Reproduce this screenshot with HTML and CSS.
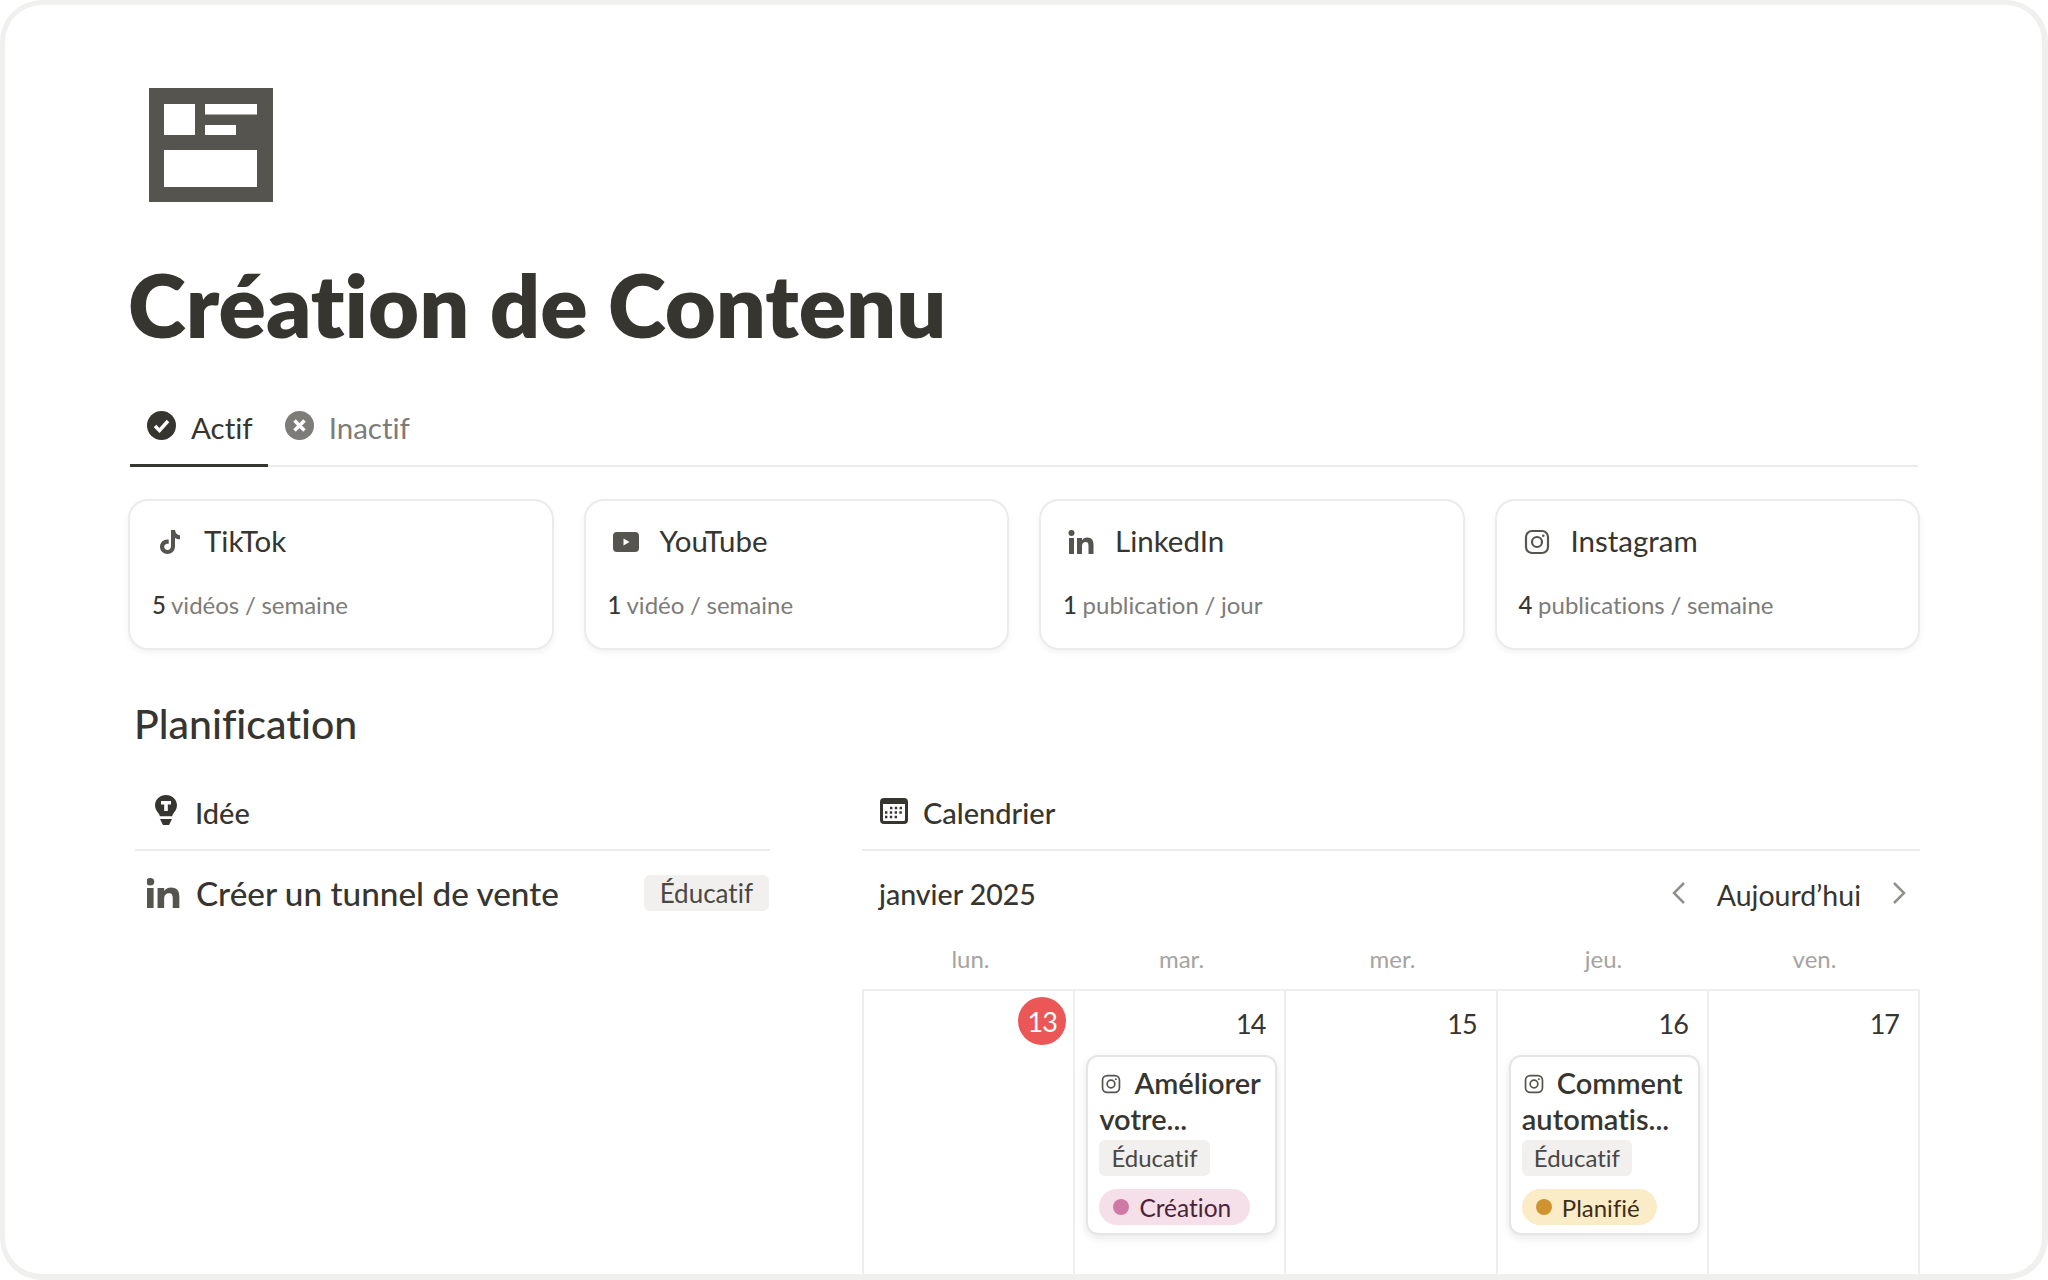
FILE: index.html
```html
<!DOCTYPE html>
<html lang="fr">
  <head>
    <meta charset="UTF-8" />
    <title>Création de Contenu</title>
    <link rel="stylesheet" href="styles.css">
  </head>
  <body>
    <div class="frame">
      <svg class="page-icon" viewBox="0 0 124 114">
        <path fill="#55544e" fill-rule="evenodd" d="M0 0H124V114H0ZM15 16V47H46V16ZM56 16V26.500H108V16ZM56 37V47H87V37ZM15 62V99H108V62Z" />
      </svg>
      <h1 class="title">Création de Contenu</h1>

      <div class="tabs">
        <div class="tab active">
          <svg class="tab-icon" viewBox="0 0 29 29"><circle cx="14.500" cy="14.500" r="14.500" fill="#37352f" /><path d="M8 15l4.500 4.500 8.500-9.500" fill="none" stroke="#fff" stroke-width="3.500" /></svg>
          <span>Actif</span>
        </div>
        <div class="tab">
          <svg class="tab-icon" viewBox="0 0 29 29"><circle cx="14.500" cy="14.500" r="14.500" fill="#7d7c78" /><path d="M9.500 9.500l10 10M19.500 9.500l-10 10" fill="none" stroke="#fff" stroke-width="3.500" /></svg>
          <span>Inactif</span>
        </div>
      </div>

      <div class="cards">
        <div class="card">
          <div class="card-head">
            <svg class="card-icon" viewBox="2 0 22 26"><path fill="#55544e" d="M14 1h4c.3 3 2 5 5 5.300v4c-2 0-3.700-.6-5-1.600v8.800c0 4.500-3.500 7.500-7.500 7.500S3 22 3 17.800c0-4.600 4-8 8.700-7.200v4.300c-2.300-.7-4.500.8-4.500 2.900 0 1.900 1.500 3.200 3.300 3.200 1.900 0 3.500-1.400 3.500-3.700z" /></svg>
            <span>TikTok</span>
          </div>
          <p class="card-sub"><b>5</b> vidéos / semaine</p>
        </div>
        <div class="card">
          <div class="card-head">
            <svg class="card-icon" viewBox="0 0 26 26"><rect y="3" width="26" height="20" rx="4" fill="#55544e" /><path d="M10.500 9.500l6 3.500-6 3.500z" fill="#fff" /></svg>
            <span>YouTube</span>
          </div>
          <p class="card-sub"><b>1</b> vidéo / semaine</p>
        </div>
        <div class="card">
          <div class="card-head">
            <svg class="card-icon" viewBox="0 0 26 26"><use href="#linkedin" /></svg>
            <span>LinkedIn</span>
          </div>
          <p class="card-sub"><b>1</b> publication / jour</p>
        </div>
        <div class="card">
          <div class="card-head">
            <svg class="card-icon" viewBox="0 0 26 26"><use href="#instagram" /></svg>
            <span>Instagram</span>
          </div>
          <p class="card-sub"><b>4</b> publications / semaine</p>
        </div>
      </div>

      <h2 class="section-title">Planification</h2>

      <div class="columns">
        <section class="ideas">
          <div class="view-head idea-head">
            <svg class="bulb" viewBox="0 0 22 30"><path fill="#37352f" d="M11 0c6 0 11 4.500 11 10.300 0 3.700-2 6-3.500 8-.8 1-1.200 2-1.300 3H4.800c-.1-1-.5-2-1.300-3C2 16.300 0 14 0 10.300 0 4.500 5 0 11 0zM5 24h12l-3 6H8z" /><path fill="#fff" d="M6 6h10v3.500h-3.200V16H9.200V9.500H6z" /></svg>
            <span>Idée</span>
          </div>
          <div class="idea-row">
            <svg class="idea-icon" viewBox="1 1 25 24" preserveAspectRatio="none"><use href="#linkedin" /></svg>
            <span class="idea-name">Créer un tunnel de vente</span>
            <span class="tag">Éducatif</span>
          </div>
        </section>

        <section class="calendar">
          <div class="view-head cal-head">
            <svg class="cal-icon" viewBox="0 0 28 26"><path fill="#37352f" fill-rule="evenodd" d="M4 0h20a4 4 0 0 1 4 4v18a4 4 0 0 1-4 4H4a4 4 0 0 1-4-4V4a4 4 0 0 1 4-4zM3 6v16a1 1 0 0 0 1 1h20a1 1 0 0 0 1-1V6z" /><path stroke="#37352f" stroke-width="2.400" stroke-dasharray="2.400 2.400" d="M10 10h14M5 14.500h19M5 19h14" /></svg>
            <span>Calendrier</span>
          </div>
          <div class="cal-bar">
            <span class="month">janvier 2025</span>
            <div class="cal-nav">
              <svg class="chevron" viewBox="0 0 14 22"><path d="M12 1L2 11l10 10" /></svg>
              <span class="today">Aujourd’hui</span>
              <svg class="chevron" viewBox="0 0 14 22"><path d="M2 1l10 10L2 21" /></svg>
            </div>
          </div>
          <div class="weekdays">
            <span>lun.</span><span>mar.</span><span>mer.</span><span>jeu.</span><span>ven.</span>
          </div>
          <div class="grid">
            <div class="day"><span class="date now">13</span></div>
            <div class="day">
              <span class="date">14</span>
              <div class="event">
                <div class="event-title"><svg class="event-icon" viewBox="0 0 26 26"><use href="#instagram" /></svg>Améliorer votre...</div>
                <span class="tag">Éducatif</span>
                <span class="status pink"><i></i>Création</span>
              </div>
            </div>
            <div class="day"><span class="date">15</span></div>
            <div class="day">
              <span class="date">16</span>
              <div class="event">
                <div class="event-title"><svg class="event-icon" viewBox="0 0 26 26"><use href="#instagram" /></svg>Comment automatis...</div>
                <span class="tag">Éducatif</span>
                <span class="status yellow"><i></i>Planifié</span>
              </div>
            </div>
            <div class="day"><span class="date">17</span></div>
          </div>
        </section>
      </div>
    </div>

    <svg class="defs" width="0" height="0">
      <defs>
        <g id="linkedin" fill="#55544e">
          <circle cx="3.500" cy="4" r="3" />
          <rect x="1" y="9" width="5" height="16" />
          <path d="M9 9h5v2.300C15 9.800 16.800 8.600 19.200 8.600c4.800 0 6.300 3 6.300 7.400v9h-5v-8c0-2.300-.6-3.900-2.700-3.900-2.200 0-3.800 1.600-3.800 4v7.900H9z" />
        </g>
        <g id="instagram" fill="none" stroke="#55544e">
          <rect x="2" y="2" width="22" height="22" rx="6" stroke-width="2.200" />
          <circle cx="13" cy="13" r="5" stroke-width="2.200" />
          <circle cx="19.300" cy="6.700" r="1.300" fill="#55544e" stroke="none" />
        </g>
      </defs>
    </svg>
  </body>
</html>
```

FILE: styles.css
```css
* {
  box-sizing: border-box;
}

body {
  margin: 0;
  background: #fff;
  overflow: hidden;
  font-family: Lato, "Noto Sans", sans-serif;
  font-variant-ligatures: none;
  color: #37352f;
}

.frame {
  height: 1280px;
  padding: 83px 122px 0 123px;
  background: #fff;
  border: solid #f0f0ef;
  border-width: 5px 6px 6px 5px;
  border-radius: 42px;
  overflow: hidden;
}

.page-icon {
  display: block;
  width: 124px;
  height: 114px;
  margin-left: 21px;
}

.title {
  margin: 52px 0 0;
  font-size: 88px;
  line-height: 100px;
  font-weight: 800;
}

.tabs {
  display: flex;
  height: 72px;
  margin: 41px 2px 0 2px;
  border-bottom: 2px solid #ecebea;
}

.tab {
  display: flex;
  align-items: center;
  gap: 15px;
  height: 72px;
  padding: 0 15px 4px 17px;
  border-bottom: 3px solid transparent;
  font-size: 29.500px;
  color: #7d7c78;
}

.tab.active {
  color: #37352f;
  border-bottom-color: #37352f;
}

.tab-icon {
  width: 29px;
  height: 29px;
  margin-bottom: 4px;
}

.cards {
  display: grid;
  grid-template-columns: repeat(4, 1fr);
  gap: 30px;
  margin-top: 32px;
}

.card {
  height: 151px;
  padding: 21px 22px;
  border: 2px solid #ecebea;
  border-radius: 20px;
  box-shadow: 0 3px 6px rgba(15, 15, 15, 0.05);
}

.card-head {
  display: flex;
  align-items: center;
  gap: 21px;
  height: 36px;
  font-size: 29.500px;
  padding-left: 5px;
}

.card-icon {
  width: 26px;
  height: 26px;
  margin-top: 3px;
}

.card-sub {
  margin: 31px 0 0;
  font-size: 24px;
  line-height: 32px;
  word-spacing: -0.500px;
  color: #7d7c78;
}

.card-sub b {
  font-weight: 500;
  color: #37352f;
}

.section-title {
  margin: 50px 0 0 6px;
  font-size: 41px;
  line-height: 48px;
  font-weight: 500;
}

.columns {
  display: flex;
  gap: 92px;
  margin-top: 28px;
  padding-left: 7px;
}

.ideas {
  width: 635px;
}

.calendar {
  width: 1058px;
}

.view-head {
  display: flex;
  align-items: center;
  height: 75px;
  border-bottom: 2px solid #ecebea;
  font-size: 29px;
  font-weight: 500;
}

.idea-head {
  gap: 18px;
  padding-left: 20px;
}

.bulb {
  width: 22px;
  height: 30px;
  margin-bottom: 6px;
}

.cal-head {
  gap: 15px;
  padding-left: 18px;
}

.cal-icon {
  width: 28px;
  height: 26px;
  margin-bottom: 4px;
}

.idea-row {
  display: flex;
  align-items: center;
  height: 36px;
  margin-top: 24px;
  padding: 0 1px 0 12px;
}

.idea-icon {
  width: 33px;
  height: 30px;
}

.idea-name {
  flex: 1;
  margin-left: 16px;
  font-size: 33.300px;
  font-weight: 500;
}

.tag {
  display: inline-block;
  height: 36px;
  padding: 0 16px;
  border-radius: 6px;
  background: #f1f0ef;
  font-size: 26px;
  line-height: 36px;
  color: #4a4843;
}

.cal-bar {
  display: flex;
  align-items: center;
  justify-content: space-between;
  height: 85px;
  padding: 1px 14px 0 17px;
}

.month {
  font-size: 28.500px;
  font-weight: 500;
}

.cal-nav {
  display: flex;
  align-items: center;
  gap: 31px;
  padding-top: 2px;
}

.today {
  font-size: 28.500px;
}

.chevron {
  width: 14px;
  height: 22px;
  margin-bottom: 4px;
  fill: none;
  stroke: #91908c;
  stroke-width: 2.500;
}

.weekdays {
  display: grid;
  grid-template-columns: repeat(5, 1fr);
  height: 53px;
  padding: 8px 0 0 3px;
  font-size: 24px;
  line-height: 30px;
  text-align: center;
  color: #a5a4a0;
}

.grid {
  display: grid;
  grid-template-columns: repeat(5, 1fr);
  height: 320px;
  border-top: 2px solid #eeeeed;
  border-left: 2px solid #eeeeed;
}

.day {
  display: flex;
  flex-direction: column;
  align-items: flex-end;
  padding: 6px 7px 0 0;
  border-right: 2px solid #eeeeed;
}

.date {
  width: 48px;
  height: 48px;
  padding-right: 12px;
  font-size: 27px;
  letter-spacing: -1px;
  line-height: 53px;
  text-align: right;
}

.date.now {
  padding-right: 0;
  border-radius: 50%;
  background: #eb5757;
  color: #fff;
  text-align: center;
  line-height: 50px;
}

.event {
  display: flex;
  flex-direction: column;
  align-items: flex-start;
  width: 191px;
  height: 180px;
  margin-top: 10px;
  padding: 8px 11px;
  border: 2px solid #e6e5e3;
  border-radius: 12px;
  box-shadow: 0 3px 8px rgba(15, 15, 15, 0.1);
}

.event-title {
  height: 72px;
  margin-bottom: 3px;
  font-size: 29px;
  line-height: 36px;
  font-weight: 600;
}

.event-icon {
  width: 20px;
  height: 20px;
  margin: 0 13px 0 2px;
}

.event .tag {
  padding: 0 12px;
  font-size: 24px;
}

.status {
  display: inline-flex;
  align-items: center;
  gap: 10px;
  height: 36px;
  margin-top: 13px;
  padding: 0 19px 0 14px;
  border-radius: 18px;
  font-size: 24.500px;
}

.status i {
  width: 16px;
  height: 16px;
  border-radius: 50%;
}

.status.pink {
  background: #f5e0e9;
  color: #4c2337;
}

.status.pink i {
  background: #cf7aa5;
}

.status.yellow {
  padding-right: 17px;
  background: #fbecc8;
  color: #402c1b;
  font-size: 24px;
}

.status.yellow i {
  background: #cf9431;
}

.defs {
  position: absolute;
}
```
